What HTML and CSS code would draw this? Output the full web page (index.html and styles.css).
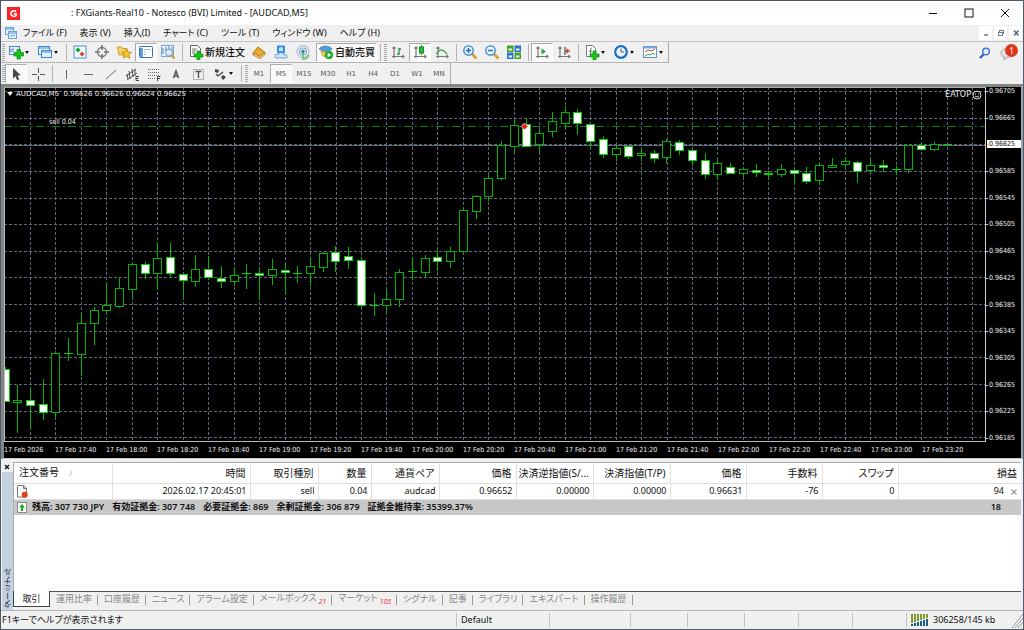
FILE: index.html
```html
<!DOCTYPE html>
<html lang="ja">
<head>
<meta charset="utf-8">
<title>FXGiants-Real10 - Notesco (BVI) Limited - [AUDCAD,M5]</title>
<link rel="stylesheet" href="styles.css">
</head>
<body>
<div class="window">
  <header class="titlebar">
    <svg class="logo" viewBox="0 0 13 13"><rect width="13" height="13" fill="#fb2323"/><path d="M9 4.7C8 3.3 4 3.3 4 6.6s4 3.4 5.1 1.8V6.8H6.8" fill="none" stroke="#fff" stroke-width="1.6"/></svg>
    <h1 class="title">: FXGiants-Real10 - Notesco (BVI) Limited - [AUDCAD,M5]</h1>
    <div class="caption">
      <button aria-label="Minimize"><svg viewBox="0 0 10 10"><path d="M1 5.5h8" stroke="#111"/></svg></button>
      <button aria-label="Maximize"><svg viewBox="0 0 10 10"><rect x="1" y="1" width="8" height="8" fill="none" stroke="#111"/></svg></button>
      <button aria-label="Close"><svg viewBox="0 0 10 10"><path d="M1 1l8 8M9 1L1 9" stroke="#111"/></svg></button>
    </div>
  </header>

  <nav class="menubar">
    <svg class="menu-icon" viewBox="0 0 12 12"><g fill="#e8f3fd" stroke="#6ba3dc"><rect x=".5" y=".5" width="8" height="7"/><rect x="3.500" y="4.500" width="8" height="7"/></g><path d="M1 2h7M4 6h7" stroke="#4c8fd3"/><path d="M5 10l2-2 1 1 2-1" fill="none" stroke="#6ba3dc"/></svg>
    <button>ファイル (F)</button><button>表示 (V)</button><button>挿入(I)</button><button>チャート (C)</button><button>ツール (T)</button><button>ウィンドウ (W)</button><button>ヘルプ (H)</button>
    <div class="mdi">
      <button aria-label="Minimize chart"><svg viewBox="0 0 8 8"><path d="M2 6h4" stroke="#6e7f8d" stroke-width="1.500"/></svg></button>
      <button aria-label="Restore chart"><svg viewBox="0 0 8 8"><g fill="#fff" stroke="#6e7f8d"><rect x="2.500" y="1.500" width="4" height="3"/><rect x="1.500" y="3.500" width="4" height="3"/></g></svg></button>
      <button aria-label="Close chart"><svg viewBox="0 0 8 8"><path d="M2 1.500l4.500 5M6.500 1.500L2 6.500" stroke="#5d6f7e" stroke-width="1.600"/></svg></button>
    </div>
  </nav>

  <div class="tools">
    <div class="toolbar first">
      <span class="grip"></span>
      <button class="drop" aria-label="New chart"><svg viewBox="0 0 16 16"><rect x="1.500" y="2.500" width="10" height="8" fill="#e6f1fb" stroke="#3f86cb"/><path d="M3 5v3M5 4v4" stroke="#3f86cb"/><path d="M9 5.500h3.500v3h3V12h-3v3H9v-3H6V8.500h3z" fill="#16c516" stroke="#0c8a10" stroke-width=".7"/></svg><i></i></button>
      <button class="drop" aria-label="Profiles"><svg viewBox="0 0 16 16"><g fill="#e6f1fb" stroke="#3f86cb"><rect x="1.500" y="2.500" width="11" height="8"/><rect x="4.500" y="6.500" width="10" height="7"/></g><path d="M2 4h10M5 8h9" stroke="#79afe2" stroke-width="1.500"/></svg><i></i></button>
      <span class="sep"></span>
      <button aria-label="Market watch"><svg viewBox="0 0 16 16"><rect x="2" y="2" width="12" height="12" fill="#f4faff" stroke="#4a90d0"/><path d="M6 3.500l2.500 2.500L6 8.500 3.500 6z" fill="#0fa51d"/><path d="M10 7.500l2.500 2.500-2.500 2.500L7.500 10z" fill="#e34522"/></svg></button>
      <button aria-label="Data window"><svg viewBox="0 0 16 16"><circle cx="8" cy="8" r="4.500" fill="none" stroke="#777" stroke-width="1.300"/><path d="M8 1v5M8 10v5M1 8h5M10 8h5" stroke="#777" stroke-width="1.600"/></svg></button>
      <button aria-label="Favorites"><svg viewBox="0 0 16 16"><path d="M1.500 3h4l1 1.500H11V11H3z" fill="#f7d169" stroke="#cf9d29"/><path d="M10.500 5l1.500 3 3.500.3-2.600 2.400.9 3.500-3.300-1.800-3.300 1.800.9-3.500L5.500 8.300 9 8z" fill="#f6c72d" stroke="#b98a13" stroke-width=".8"/></svg></button>
      <button class="on" aria-label="Terminal"><svg viewBox="0 0 16 16"><rect x="1.500" y="2.500" width="13" height="11" rx="1" fill="#fff" stroke="#2f74bb"/><path d="M2 4h3v9H2z" fill="#5ea2e2"/><path d="M6 5.500h7M6 8h2M6 10.500h2" stroke="#9ab7d3"/><path d="M3 6v1M3 9v1" stroke="#c23b2c"/></svg></button>
      <button aria-label="Strategy tester"><svg viewBox="0 0 16 16"><rect x="1.500" y="1.500" width="12" height="11" fill="#eef4fa" stroke="#7aa7d3"/><path d="M3 4v6M6 3v4M12 3v5M9 2v3" stroke="#3f86cb"/><circle cx="9" cy="8.500" r="3.500" fill="#d8ecfa" stroke="#6e97b8"/><path d="M11.500 11l3 3.500" stroke="#d09b2b" stroke-width="2"/></svg></button>
      <span class="sep"></span>
      <button class="labelled"><svg viewBox="0 0 16 16"><path d="M2.500 1.500h7l3 3v8h-10z" fill="#fff" stroke="#666"/><path d="M4 5h5M4 7h4M4 9h3" stroke="#777"/><path d="M9 7h3v3h3v3h-3v3H9v-3H6v-3h3z" fill="#16c516" stroke="#0c8a10" stroke-width=".7"/></svg>新規注文</button>
      <button aria-label="MetaEditor"><svg viewBox="0 0 16 16"><path d="M2 9l5-6 7 5.500-5 5.500z" fill="#e8a92d" stroke="#b77612"/><path d="M2 9l7 3.500L14 8.500v2L9 14.500 2 11z" fill="#f7e3ae" stroke="#a8690f" stroke-width=".8"/></svg></button>
      <button aria-label="Cloud"><svg viewBox="0 0 16 16"><rect x="4" y="1.500" width="8" height="8" rx="1" fill="#2e93e5"/><path d="M6 4l2-1 2 1v3H6z" fill="#bfe2fb"/><path d="M3 14c-3-3 1-5 2-3 1-3 5-3 6 0 3-1 4 1 2.500 3z" fill="#d8e8f8" stroke="#6f9bc8"/></svg></button>
      <button aria-label="Signals"><svg viewBox="0 0 16 16"><g fill="none"><circle cx="8" cy="7.500" r="6" stroke="#b4c9d8" stroke-width="1.300"/><circle cx="8" cy="7.500" r="3.500" stroke="#7aa9c7" stroke-width="1.200"/></g><path d="M8 8v7c3 0 5-2 6-4" fill="none" stroke="#7cc77b" stroke-width="2"/><circle cx="8" cy="7.500" r="1.800" fill="#2b85c4"/></svg></button>
      <button class="labelled auto on"><svg viewBox="0 0 16 16"><path d="M1 5c3-4 10-4 13 0l-4 3-5-1z" fill="#4c9fdd" stroke="#2f78b5" stroke-width=".7"/><path d="M3 7l7 1-1 6-4-2z" fill="#f4cb4b" stroke="#b58a19" stroke-width=".7"/><circle cx="11" cy="11" r="4.200" fill="#1fae2c"/><path d="M9.700 8.700v4.600l3.600-2.300z" fill="#fff"/></svg>自動売買</button>
      <span class="sep"></span><span class="grip"></span>
      <button aria-label="Bar chart"><svg viewBox="0 0 16 16"><path d="M4 3v11M2 12.500h12M2.500 4.500L4 3l1.500 1.500M12.500 11l1.500 1.500-1.500 1.500" stroke="#777" fill="none" stroke-width="1.200"/><path d="M9 4v7M7 10h2M9 5h2" stroke="#22923a" stroke-width="1.300"/></svg></button>
      <button class="on" aria-label="Candlesticks"><svg viewBox="0 0 16 16"><path d="M4 3v11M2 12.500h12M2.500 4.500L4 3l1.500 1.500M12.500 11l1.500 1.500-1.500 1.500" stroke="#777" fill="none" stroke-width="1.200"/><path d="M9.500 1v10" stroke="#14891c"/><rect x="7.500" y="3" width="4" height="6" fill="#1fc52b" stroke="#14891c"/></svg></button>
      <button aria-label="Line chart"><svg viewBox="0 0 16 16"><path d="M4 3v11M2 12.500h12M2.500 4.500L4 3l1.500 1.500M12.500 11l1.500 1.500-1.500 1.500" stroke="#777" fill="none" stroke-width="1.200"/><path d="M2 10c4-5 6-6 11 0" fill="none" stroke="#33a043" stroke-width="1.200"/></svg></button>
      <span class="sep"></span>
      <button aria-label="Zoom in"><svg viewBox="0 0 16 16"><path d="M9.500 9.500l5 5" stroke="#d4a32e" stroke-width="2.600"/><circle cx="6.500" cy="6.500" r="4.700" fill="#e3f3ff" stroke="#2d82d3" stroke-width="1.300"/><path d="M4 6.500h5M6.500 4v5" stroke="#2468b4" stroke-width="1.400"/></svg></button>
      <button aria-label="Zoom out"><svg viewBox="0 0 16 16"><path d="M9.500 9.500l5 5" stroke="#d4a32e" stroke-width="2.600"/><circle cx="6.500" cy="6.500" r="4.700" fill="#e3f3ff" stroke="#2d82d3" stroke-width="1.300"/><path d="M4 6.500h5" stroke="#2468b4" stroke-width="1.400"/></svg></button>
      <button aria-label="Tile windows"><svg viewBox="0 0 16 16"><path d="M1 1.500h6.500V8H1zM8.500 8.500H15V15H8.500z" fill="#40a528"/><path d="M8.500 1.500H15V8H8.500zM1 8.500h6.500V15H1z" fill="#2e72ce"/><path d="M2.500 4.500h3.500v2H2.500zM10 4.500h3.500v2H10zM2.500 11.500h3.500v2H2.500zM10 11.500h3.500v2H10z" fill="#e8f4e8"/></svg></button>
      <span class="sep"></span>
      <button class="on" aria-label="Auto scroll"><svg viewBox="0 0 16 16"><path d="M4 3v11M2 12.500h12M2.500 4.500L4 3l1.500 1.500M12.500 11l1.500 1.500-1.500 1.500" stroke="#777" fill="none" stroke-width="1.200"/><path d="M7.500 4.500v6l4.500-3z" fill="#24a536"/></svg></button>
      <button aria-label="Chart shift"><svg viewBox="0 0 16 16"><path d="M4 3v11M2 12.500h12M2.500 4.500L4 3l1.500 1.500M12.500 11l1.500 1.500-1.500 1.500" stroke="#777" fill="none" stroke-width="1.200"/><path d="M9 3v8" stroke="#555" stroke-width="1.300"/><path d="M10 7h4M12 5l-2 2 2 2" stroke="#c9472b" fill="none" stroke-width="1.300"/></svg></button>
      <span class="sep"></span>
      <button class="drop" aria-label="Indicators"><svg viewBox="0 0 16 16"><path d="M2.500 1.500h6l3 3v8h-9z" fill="#fff" stroke="#777"/><path d="M6.500 10V5.500Q6.500 4 8 4M5 7h3" stroke="#777" fill="none"/><path d="M9 7h3v3h3v3h-3v3H9v-3H6v-3h3z" fill="#16c516" stroke="#0c8a10" stroke-width=".7"/></svg><i></i></button>
      <button class="drop" aria-label="Periods"><svg viewBox="0 0 16 16"><circle cx="8" cy="8" r="5.800" fill="#e9f4fd" stroke="#1d70c2" stroke-width="2.200"/><path d="M8 4.500V8h3" stroke="#456" fill="none"/></svg><i></i></button>
      <button class="drop" aria-label="Templates"><svg viewBox="0 0 16 16"><rect x="1.500" y="2.500" width="13" height="11" fill="#fff" stroke="#5b93ca"/><path d="M2 3.500h12" stroke="#74aae0" stroke-width="2"/><path d="M3 8l3-2 3 1 4-2" stroke="#c54830" fill="none"/><path d="M3 12l3-2 2 1 3-2 2 2" stroke="#35a04c" fill="none"/></svg><i></i></button>
    </div>
    <div class="toolbar second">
      <span class="grip"></span>
      <button class="on" aria-label="Cursor"><svg viewBox="0 0 16 16"><path d="M5 2v10.500l2.500-2.200 1.700 3.900 2-.9-1.700-3.700 3.300-.3z" fill="#444"/></svg></button>
      <button aria-label="Crosshair"><svg viewBox="0 0 16 16"><path d="M8.500 2v5M8.500 10v5M2 8.500h5M10 8.500h5" stroke="#555"/></svg></button>
      <span class="sep"></span>
      <button aria-label="Vertical line"><svg viewBox="0 0 16 16"><path d="M8.500 4v9" stroke="#666"/></svg></button>
      <button aria-label="Horizontal line"><svg viewBox="0 0 16 16"><path d="M4 8.500h9" stroke="#666"/></svg></button>
      <button aria-label="Trendline"><svg viewBox="0 0 16 16"><path d="M4 13L14 4" stroke="#666"/></svg></button>
      <button aria-label="Channel"><svg viewBox="0 0 16 16"><path d="M2 10l10-7M3 14l10-7M5 5l1 8M8 3l1 8M11 3v7M3 8l1 5" stroke="#555"/><path d="M15 10.500h-3v4h3M12 12.500h2.500" fill="none" stroke="#444"/></svg></button>
      <button aria-label="Fibonacci"><svg viewBox="0 0 16 16"><path d="M2 3.500h12M2 6.500h12M2 9.500h12M2 12.500h7" stroke="#666" stroke-dasharray="1 1"/><path d="M14.500 10.500h-3v4.500M11.500 12.500H14" fill="none" stroke="#444"/></svg></button>
      <button aria-label="Text"><svg viewBox="0 0 16 16"><path d="M5.500 12L8 5l2.500 7M6.500 10h3" stroke="#555" fill="none" stroke-width="1.500"/></svg></button>
      <button aria-label="Text label"><svg viewBox="0 0 16 16"><rect x="3.500" y="3.500" width="10" height="10" fill="none" stroke="#777" stroke-dasharray="1 1"/><path d="M5.500 5.500h6M8.500 5.500V12" stroke="#555" stroke-width="1.400"/></svg></button>
      <button class="drop" aria-label="Arrows"><svg viewBox="0 0 16 16"><path d="M3 3l4 1-1 3-3-1zM11 9l3 2-3 3-2-3z" fill="#444"/><path d="M4 8l2 2 5-4" fill="none" stroke="#444" stroke-width="1.300"/></svg><i></i></button>
      <span class="sep"></span><span class="grip"></span>
      <button class="tf">M1</button><button class="tf on">M5</button><button class="tf wide">M15</button><button class="tf wide">M30</button><button class="tf">H1</button><button class="tf">H4</button><button class="tf">D1</button><button class="tf">W1</button><button class="tf">MN</button>
    </div>
    <div class="corner">
      <button aria-label="Search"><svg viewBox="0 0 14 14"><path d="M6 8l-4 4" stroke="#2e62c0" stroke-width="2.400"/><circle cx="8" cy="5.500" r="3.300" fill="#eaf2ff" stroke="#3c73d3" stroke-width="1.400"/></svg></button>
      <button class="chat" aria-label="Messages"><svg viewBox="0 0 14 14"><ellipse cx="7" cy="7" rx="6" ry="4.500" fill="#e3e3e6" stroke="#aaa"/><path d="M4 11v3l4-3" fill="#ddd" stroke="#aaa"/></svg><b>1</b></button>
    </div>
  </div>

  <main class="chart">
    <div class="plot">
      <svg id="plot" viewBox="4 87 982 355" preserveAspectRatio="none"></svg>
      <div class="quote"><span class="tri"></span>AUDCAD,M5&nbsp; 0.96626 0.96626 0.96624 0.96625</div>
      <div class="order">sell 0.04</div>
      <div class="expert">EATOP<svg viewBox="0 0 10 10"><circle cx="5" cy="5" r="4" fill="none" stroke="#ddd"/><path d="M3.500 3.500v1M6.500 3.500v1M3 6q2 2 4 0" fill="none" stroke="#ddd"/></svg></div>
    </div>
    <div class="prices"><span>0.96705</span><span>0.96665</span><span class="now">0.96625</span><span>0.96585</span><span>0.96545</span><span>0.96505</span><span>0.96465</span><span>0.96425</span><span>0.96385</span><span>0.96345</span><span>0.96305</span><span>0.96265</span><span>0.96225</span><span>0.96185</span></div>
    <div class="times"><span>17 Feb 2026</span><span>17 Feb 17:40</span><span>17 Feb 18:00</span><span>17 Feb 18:20</span><span>17 Feb 18:40</span><span>17 Feb 19:00</span><span>17 Feb 19:20</span><span>17 Feb 19:40</span><span>17 Feb 20:00</span><span>17 Feb 20:20</span><span>17 Feb 20:40</span><span>17 Feb 21:00</span><span>17 Feb 21:20</span><span>17 Feb 21:40</span><span>17 Feb 22:00</span><span>17 Feb 22:20</span><span>17 Feb 22:40</span><span>17 Feb 23:00</span><span>17 Feb 23:20</span></div>
  </main>

  <section class="terminal">
    <aside class="side"><button aria-label="Close terminal"><svg viewBox="0 0 8 8"><path d="M2 2l4 4M6 2L2 6" stroke="#111" stroke-width="1.300"/></svg></button><div class="side-title">ターミナル</div></aside>
    <div class="pane">
      <div class="sheet">
        <table>
          <colgroup><col class="c-id"><col class="c-time"><col class="c-type"><col class="c-lot"><col class="c-type"><col class="c-wide"><col class="c-wide"><col class="c-wide"><col class="c-num"><col class="c-num"><col class="c-num"><col></colgroup>
          <thead><tr><th class="left">注文番号 <small>/</small></th><th>時間</th><th>取引種別</th><th>数量</th><th>通貨ペア</th><th>価格</th><th>決済逆指値(S/...</th><th>決済指値(T/P)</th><th>価格</th><th>手数料</th><th>スワップ</th><th>損益</th></tr></thead>
          <tbody>
            <tr><td class="left"><svg viewBox="0 0 12 13"><path d="M1.500.5h6l3 3v8.500h-9z" fill="#fff" stroke="#777"/><path d="M7.500.5v3h3" fill="none" stroke="#777"/><circle cx="8.700" cy="9.700" r="3" fill="#e0431a"/></svg></td><td>2026.02.17 20:45:01</td><td>sell</td><td>0.04</td><td>audcad</td><td>0.96652</td><td>0.00000</td><td>0.00000</td><td>0.96631</td><td>-76</td><td>0</td><td class="profit">94<button aria-label="Close order"><svg viewBox="0 0 8 8"><path d="M1.500 1.500l5 5M6.500 1.500l-5 5" stroke="#999" stroke-width="1.200"/></svg></button></td></tr>
            <tr class="total"><td colspan="11" class="left"><svg viewBox="0 0 12 13"><rect x="1.500" y="1.500" width="9" height="10" fill="#fff" stroke="#888"/><path d="M6 3l3 3.500H7V10H5V6.500H3z" fill="#1aa526"/></svg><span>残高: 307 730 JPY</span><span>有効証拠金: 307 748</span><span>必要証拠金: 869</span><span>余剰証拠金: 306 879</span><span>証拠金維持率: 35399.37%</span></td><td class="sum">18</td></tr>
          </tbody>
        </table>
      </div>
      <nav class="tabs"><button class="active">取引</button><button>運用比率</button><button>口座履歴</button><button>ニュース</button><button>アラーム設定</button><button>メールボックス<sub>21</sub></button><button>マーケット<sub>105</sub></button><button>シグナル</button><button>記事</button><button>ライブラリ</button><button>エキスパート</button><button>操作履歴</button></nav>
    </div>
  </section>

  <footer class="status">
    <span class="help">F1キーでヘルプが表示されます</span><span class="w93">Default</span><span class="w81"></span><span class="w56"></span><span class="w56"></span><span class="w54"></span><span class="w54"></span><span class="w54"></span>
    <span class="traffic"><svg viewBox="0 0 19 12"><path d="M1 0v9M4 0v8M7 0v7M10 0v6M13 0v5M16 0v4" stroke="#80972c" stroke-width="2"/><path d="M1 10v2M4 9v3M7 8v4M10 7v5M13 6v6M16 5v7" stroke="#1d5e80" stroke-width="2"/></svg>306258/145 kb</span>
    <svg class="resize" viewBox="0 0 12 16"><path d="M1 16L12 2M4 16l8-10M7 16l5-6" stroke="#999"/></svg>
  </footer>
</div>
<script src="chart.js"></script>
</body>
</html>
```

FILE: styles.css
```css
* { box-sizing: border-box; }
body { margin: 0; height: 100vh; background: #f0f0f0; font: 9px/12px "Noto Sans", "Noto Sans CJK JP", sans-serif; font-feature-settings: "palt"; color: #111; }
button { font: inherit; font-feature-settings: inherit; color: inherit; background: none; border: 0; padding: 0; white-space: nowrap; }
svg { display: block; flex: none; }
.window { display: flex; flex-direction: column; height: 100vh; border: 1px solid #4f5b68; background: #f0f0f0; overflow: hidden; }

.titlebar { display: flex; align-items: center; height: 24px; background: #fff; padding-left: 6px; flex: none; }
.logo { width: 13px; height: 13px; }
.title { font-size: 9px; font-weight: 400; margin: 0 auto 0 51px; }
.caption { display: flex; }
.caption button { width: 36px; display: flex; justify-content: center; }
.caption svg { width: 10px; height: 10px; }

.menubar { display: flex; align-items: center; gap: 13px; height: 17px; padding-left: 4px; border-bottom: 1px solid #c4c4c4; flex: none; }
.menu-icon { width: 12px; height: 12px; margin-right: -7px; }
.mdi { display: flex; gap: 2px; margin-left: auto; padding-right: 1px; }
.mdi button { width: 13px; height: 14px; background: #fff; display: flex; align-items: center; justify-content: center; }
.mdi svg { width: 8px; height: 8px; }

.tools { display: grid; grid-template-columns: auto 1fr; grid-template-rows: 21px 21px; flex: none; }
.toolbar { display: flex; align-items: center; justify-self: start; border-right: 1px solid #aaa; height: 21px; }
.toolbar.first { border-bottom: 1px solid #b5b5b5; }
.second { grid-row: 2; grid-column: 1; }
.toolbar button { width: 22px; height: 19px; display: flex; align-items: center; justify-content: center; flex: none; }
.toolbar svg { width: 16px; height: 16px; }
.toolbar .on { background: #f9f9f9; border: 1px solid #ababab; border-right-color: #fff; border-bottom-color: #fff; }
.toolbar .drop { width: 29px; gap: 1px; }
.drop i { border: 2px solid transparent; border-top: 3px solid #111; border-bottom: 0; width: 4px; margin-right: 2px; }
.toolbar .labelled { width: 63px; font-size: 10px; gap: 1px; font-weight: 500; }
.toolbar .auto { margin-left: 2px; width: 61px; }
.sep { width: 1px; height: 17px; background: #b4b4b4; margin: 0 2px 0 3px; }
.grip { width: 3px; height: 17px; background: repeating-linear-gradient(#aaa 0 1px, #f0f0f0 1px 2px); margin-left: 1px; }
.toolbar .tf { font: 7px/12px "DejaVu Sans", sans-serif; color: #555; }
.toolbar .wide { width: 24px; }
.corner { grid-row: 1; grid-column: 2; display: flex; justify-content: flex-end; align-items: center; gap: 8px; padding-right: 5px; }
.corner svg { width: 14px; height: 14px; }
.chat { position: relative; padding-right: 4px; }
.chat b { position: absolute; right: 0; top: -2px; width: 13px; height: 13px; border-radius: 50%; background: #df3518; color: #fff; font: 9px/13px "Noto Sans", sans-serif; }

.chart { flex: 371 1 0; min-height: 0; display: grid; grid-template-columns: 1fr 35px; grid-template-rows: 1fr 16px; background: #000; border: 3px solid #858585; border-right: 2px solid #9aa4ad; border-bottom: 1px solid #ccc; color: #eee; font: 7px/8px "DejaVu Sans Condensed", "DejaVu Sans", sans-serif; }
.plot { position: relative; min-height: 0; }
.plot > svg { width: 100%; height: 100%; }
.quote { position: absolute; left: 3px; top: 3px; display: flex; align-items: center; gap: 3px; white-space: pre; font-family: "DejaVu Sans", sans-serif; }
.tri { border: 3px solid transparent; border-top: 4px solid #eee; border-bottom: 0; }
.order { position: absolute; left: 45px; top: 31px; }
.expert { position: absolute; right: 4px; top: 3px; display: flex; align-items: center; gap: 1px; font: 8px/10px "DejaVu Sans", sans-serif; }
.expert svg { width: 10px; height: 10px; }
.prices { display: flex; flex-direction: column; justify-content: space-between; min-height: 0; }
.prices span { position: relative; padding-left: 3px; }
.prices span::before { content: ""; position: absolute; left: 0; top: 4px; width: 2px; height: 1px; background: #ccc; }
.prices .now { background: #fff; color: #111; padding-left: 2px; margin-left: 1px; }
.times { grid-column: 1 / 3; display: grid; grid-template-columns: repeat(19, 1fr); padding: 4px 48px 0 0; white-space: nowrap; }

.terminal { flex: 148 1 0; min-height: 0; display: flex; padding-top: 3px; }
.side { width: 12px; flex: none; display: flex; flex-direction: column; align-items: center; }
.side button { height: 10px; }
.side svg { width: 8px; height: 8px; }
.side-title { flex: 1; width: 11px; margin-left: 1px; background: #c3d1e0; writing-mode: vertical-rl; transform: rotate(180deg); font-size: 8px; line-height: 11px; padding-top: 2px; }
.pane { flex: 1; min-width: 0; display: flex; flex-direction: column; padding-right: 2px; }
.sheet { flex: 1; min-height: 0; background: #fff; border-left: 1px solid #aaa; border-top: 1px solid #aaa; }
table { width: 100%; table-layout: fixed; border-collapse: collapse; }
.c-id { width: 98px; } .c-time { width: 138px; } .c-type { width: 68px; } .c-lot { width: 53px; } .c-num { width: 76px; } .c-wide { width: 77px; }
th, td { border-right: 1px solid #e0e0e0; border-bottom: 1px solid #ddd; text-align: right; padding: 0 3px 0 2px; white-space: nowrap; overflow: hidden; }
th { height: 20px; font-weight: 400; font-size: 10px; padding-right: 4px; }
th.left { padding-left: 5px; }
th small { margin-left: 8px; color: #999; font-size: 7px; }
td { height: 16px; }
th:last-child, td:last-child { border-right: 0; }
.left { text-align: left; }
td svg { width: 12px; height: 13px; }
.profit button { margin-left: 6px; vertical-align: middle; }
.profit button svg { width: 8px; height: 8px; }
.total td { background: #c8c8c8; border: 0; font-weight: 600; }
.total .left svg { display: inline-block; vertical-align: middle; margin-right: 4px; }
.total span { margin-right: 8px; }
.total .sum { padding-right: 20px; }
.tabs { display: flex; height: 19px; flex: none; border-top: 1px solid #555; color: #888; }
.tabs button { position: relative; padding: 0 6px 4px; }
.tabs button:not(.active)::after { content: ""; position: absolute; right: 0; top: 3px; width: 1px; height: 10px; background: #999; }
.tabs .active { width: 37px; height: 16px; margin-top: -1px; padding: 0; background: #fff; color: #111; border: 1px solid #444; border-top: 0; }
.tabs sub { font: italic 7px/8px "Noto Sans", sans-serif; color: #ee2c3c; vertical-align: -3px; margin-left: 2px; }

.status { display: flex; align-items: center; height: 19px; flex: none; border-top: 1px solid #b8b8b8; background: #f0f0f0; }
.status span { height: 14px; line-height: 14px; padding-left: 4px; border-left: 1px solid #c2c2c2; }
.status .help { flex: 1; border: 0; padding-left: 1px; }
.w93 { width: 93px; } .w81 { width: 81px; } .w56 { width: 57px; } .w54 { width: 54px; }
.status .traffic { width: 105px; display: flex; align-items: center; gap: 3px; }
.traffic svg { width: 19px; height: 12px; }
.resize { width: 12px; height: 16px; }
```

FILE: chart.js
```js
// Each candle: [kind, high, low, bodyTop, bodyBottom]; w = bearish, h = bullish, d = doji
const candles = [
  ["w",367,401,369,401],["h",385,432,400,402],["w",387,427,400,405],["w",379,419,404,412],["h",351,418,353,412],
  ["d",338,361,353,353],["h",313,375,323,354],["h",307,344,310,323],["h",283,314,305,310],["h",278,307,288,306],
  ["h",262,297,264,289],["w",262,278,264,273],["h",243,289,258,273],["w",243,277,257,273],["w",273,296,274,280],
  ["h",255,286,269,281],["w",256,279,269,277],["w",266,287,278,281],["h",267,285,275,281],["d",264,289,273,273],
  ["w",268,299,273,275],["h",259,284,269,275],["w",264,293,270,272],["d",266,283,273,273],["h",257,285,266,273],
  ["h",252,271,253,267],["w",246,271,252,261],["w",247,268,256,260],["w",257,306,260,305],["d",293,316,305,305],
  ["h",290,312,299,305],["h",269,306,272,299],["d",257,280,271,271],["h",255,276,258,272],["w",249,270,257,261],
  ["h",247,267,251,261],["h",207,253,210,251],["h",195,218,196,211],["h",175,200,178,196],["h",141,179,145,178],
  ["h",120,151,125,146],["w",118,146,124,146],["h",130,151,133,144],["h",112,136,121,131],["h",106,126,112,123],
  ["w",109,134,112,123],["w",124,147,124,141],["w",136,157,139,154],["h",145,160,148,154],["w",146,158,146,156],
  ["h",149,160,153,155],["w",150,162,153,158],["h",139,162,141,157],["w",140,154,142,150],["w",149,165,150,160],
  ["w",153,178,160,174],["h",159,179,163,174],["w",163,173,167,173],["h",167,176,169,173],["w",164,176,170,172],
  ["w",171,179,173,174],["h",164,176,169,174],["w",168,184,170,173],["w",167,183,173,181],["h",162,184,165,180],
  ["h",158,167,165,167],["h",157,167,161,164],["w",161,182,162,171],["h",157,171,165,170],["w",160,171,165,167],
  ["d",166,175,169,169],["h",145,172,145,169],["w",142,150,145,149],["h",142,150,144,149],["d",144,144,144,144]
];

const parts = [];
const line = (x1, y1, x2, y2, cls) => parts.push(`<path d="M${x1} ${y1}L${x2} ${y2}" ${cls}/>`);
const grid = 'stroke="#5a6a79" stroke-dasharray="3 2"';
parts.push('<rect x="4" y="87" width="982" height="355" fill="#000"/>');
for (let i = 0; i < 38; i++) {
  const x = Math.floor(30.5 + i * 25.46) + 0.5;
  line(x, 87, x, 441, grid);
}
for (let i = 0; i < 14; i++) {
  const y = Math.floor(91.6 + i * 26.62) + 0.5;
  line(4, y, 985, y, grid);
}
line(4, 126.5, 985, 126.5, 'stroke="#1c7a1c" stroke-dasharray="8 3 2 3"');
line(4, 145.5, 985, 145.5, 'stroke="#5e6e7c"');
candles.forEach(([kind, high, low, top, bottom], i) => {
  const x = Math.floor(5 + i * 12.73) + 0.5;
  const ink = 'stroke="#00b400"';
  if (kind === "d") {
    line(x, high, x, low, ink);
    line(x - 4.5, top + 0.5, x + 4.5, top + 0.5, 'stroke="#00d200"');
    return;
  }
  line(x, high, x, low + 1, ink);
  parts.push(`<rect x="${x - 4}" y="${top + 0.5}" width="8" height="${bottom - top}" fill="${kind === "w" ? "#fff" : "#000"}" stroke="${kind === "w" ? "#00d200" : "#00b400"}"/>`);
});
parts.push('<path d="M524.500 123l3.500 3.500-3.500 3.500-3.500-3.500z" fill="#f01818" stroke="#fff" stroke-width=".6"/>');
line(4.5, 87, 4.5, 442, 'stroke="#bbb"');
line(4, 441.5, 986, 441.5, 'stroke="#bbb"');
line(985.5, 87, 985.5, 442, 'stroke="#ccc"');
line(4, 87.5, 986, 87.5, 'stroke="#aaa"');
document.getElementById("plot").innerHTML = parts.join("");
```
